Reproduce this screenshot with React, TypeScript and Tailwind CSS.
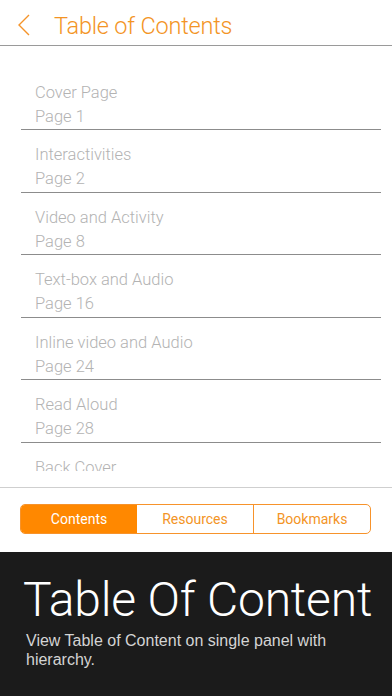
import React from "react";

const items = [
  ["Cover Page", "Page 1"],
  ["Interactivities", "Page 2"],
  ["Video and Activity", "Page 8"],
  ["Text-box and Audio", "Page 16"],
  ["Inline video and Audio", "Page 24"],
  ["Read Aloud", "Page 28"],
  ["Back Cover", "Page 32"],
];

export default function App() {
  return (
    <div
      className="w-[392px] h-[696px] flex flex-col bg-white overflow-hidden"
      style={{ fontFamily: "Roboto, 'Liberation Sans', sans-serif" }}
    >
      <div className="h-[46px] shrink-0 flex items-center border-b border-[#9a9a9a] relative">
        <svg className="ml-[17px] mt-[4px]" width="14" height="22" viewBox="0 0 14 22" fill="none">
          <path d="M12 1 L2 11 L12 21" stroke="#F5942A" strokeWidth="1.4" />
        </svg>
        <span className="ml-[23px] mt-[8px] text-[23.5px] font-light text-[#F39425] leading-none tracking-[-0.2px]">
          Table of Contents
        </span>
      </div>
      <div className="h-[425px] shrink-0 overflow-hidden pt-[21.5px] pl-[21px] pr-[11px]">
        {items.map(([t, p]) => (
          <div key={t} className="h-[62.5px] border-b-[1.5px] border-[#8c8c8c] pt-[13px] pl-[14px] text-[16.5px] font-light text-[#b3b3b3] leading-[24px]">
            <div>{t}</div>
            <div>{p}</div>
          </div>
        ))}
      </div>
      <div className="h-[17px] shrink-0 border-b border-[#cfcfcf]" />
      <div className="h-[64px] shrink-0 flex items-start pt-[16px] px-[20px]">
        <div className="w-[351px] h-[30px] flex rounded-[5px] border border-[#F7932B] overflow-hidden text-[14px]">
          <div className="flex-1 flex items-center justify-center bg-[#FF8800] text-white">Contents</div>
          <div className="flex-1 flex items-center justify-center border-r border-[#F7932B] text-[#F39425]">Resources</div>
          <div className="flex-1 flex items-center justify-center text-[#F39425]">Bookmarks</div>
        </div>
      </div>
      <div className="flex-1 bg-[#1b1b1b] pl-[23px] pt-[22px]">
        <div className="text-[48px] font-light text-white leading-[52px] tracking-[-0.2px]">Table Of Content</div>
        <div
          className="mt-[5px] pl-[3px] pr-[30px] text-[16px] text-[#d4d4d4] leading-[19px]"
          style={{ fontFamily: "'Liberation Sans', Arial, sans-serif" }}
        >
          View Table of Content on single panel with hierarchy.
        </div>
      </div>
    </div>
  );
}
